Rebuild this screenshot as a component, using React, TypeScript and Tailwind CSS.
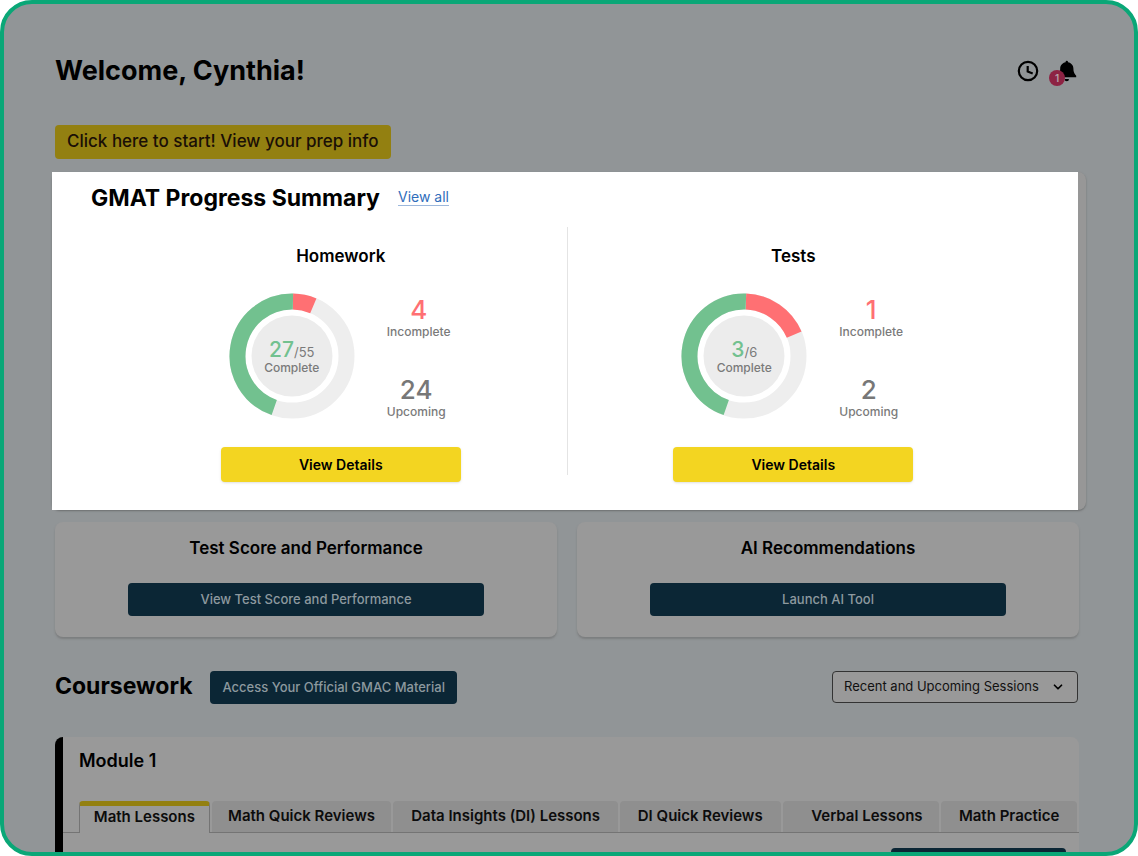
import React, { useState } from 'react';
import { ChevronDown } from 'lucide-react';

interface Progress {
  title: string;
  complete: number;
  total: number;
  incomplete: number;
  upcoming: number;
  // Ring angles in degrees, clockwise from the top
  redFrom: number;
  redTo: number;
  greenFrom: number;
}

const homework: Progress = {
  title: 'Homework', complete: 27, total: 55, incomplete: 4, upcoming: 24, redFrom: 1, redTo: 23, greenFrom: 199,
};
const tests: Progress = {
  title: 'Tests', complete: 3, total: 6, incomplete: 1, upcoming: 2, redFrom: 2, redTo: 67, greenFrom: 199,
};

const tabs = [
  'Math Lessons',
  'Math Quick Reviews',
  'Data Insights (DI) Lessons',
  'DI Quick Reviews',
  'Verbal Lessons',
  'Math Practice',
];

const arc = (from: number, to: number, r: number) => {
  const point = (deg: number) => {
    const rad = ((deg - 90) * Math.PI) / 180;
    return `${63 + r * Math.cos(rad)} ${63 + r * Math.sin(rad)}`;
  };
  return `M ${point(from)} A ${r} ${r} 0 ${to - from > 180 ? 1 : 0} 1 ${point(to)}`;
};

const Donut: React.FC<{ item: Progress }> = ({ item }) => (
  <div className="relative h-[126px] w-[126px]">
    <svg viewBox="0 0 126 126" className="h-full w-full" fill="none" aria-hidden="true">
      <circle cx="63" cy="63" r="54.5" stroke="#eeeeee" strokeWidth="16" />
      <path d={arc(item.redFrom, item.redTo, 54.5)} stroke="#ff7073" strokeWidth="16" />
      <path d={arc(item.greenFrom, 360 + item.redFrom, 54.5)} stroke="#72c18f" strokeWidth="16" />
      <circle cx="63" cy="63" r="40.5" fill="#ececec" />
    </svg>
    <div className="absolute inset-0 flex flex-col items-center justify-center pt-1.5 text-[#7a7a7a]">
      <div className="text-[13px] leading-4">
        <span className="text-[21px] leading-4 font-medium text-[#72c18f]">{item.complete}</span>/{item.total}
      </div>
      <div className="text-xs leading-4 font-medium">Complete</div>
    </div>
  </div>
);

const Stat: React.FC<{ value: number; label: string; red?: boolean }> = ({ value, label, red }) => (
  <div className="flex flex-col items-center">
    <span className={`text-[26px] leading-7 font-medium ${red ? 'text-[#ff7073]' : 'text-[#777777]'}`}>{value}</span>
    <span className="text-xs leading-4 font-medium text-[#7a7a7a]">{label}</span>
  </div>
);

const ProgressColumn: React.FC<{ item: Progress }> = ({ item }) => (
  <div className="flex flex-col items-center">
    <h3 className="mt-[17px] text-[17px] leading-6 font-semibold">{item.title}</h3>
    <div className="mt-6 flex w-60 items-center gap-8 pl-2">
      <Donut item={item} />
      <div className="flex flex-col items-start gap-9 pt-1">
        <Stat value={item.incomplete} label="Incomplete" red />
        <Stat value={item.upcoming} label="Upcoming" />
      </div>
    </div>
    <button className="mt-[27px] h-[35px] w-60 rounded bg-[#f3d521] text-[14px] font-semibold shadow-sm">
      View Details
    </button>
  </div>
);

const ActionCard: React.FC<{ title: string; action: string }> = ({ title, action }) => (
  <div className="flex h-[115px] flex-col items-center rounded-lg bg-[#999999] pt-[14px] shadow-[0_2px_2px_#7c7e7f]">
    <h3 className="text-[17px] leading-6 font-semibold">{title}</h3>
    <button className="mt-[23px] h-[33px] w-[71%] rounded bg-[#0b2635] text-[13px] font-medium text-[#8d999f]">
      {action}
    </button>
  </div>
);

export default function App() {
  const [activeTab, setActiveTab] = useState(tabs[0]);

  return (
    <div className="h-screen overflow-hidden rounded-[32px] border-4 border-[#0aa777] bg-[#919597] pr-[55px] pl-[51px] font-[Inter,sans-serif] text-black">
      {/* Header */}
      <header className="flex items-center justify-between pt-[51px] pr-0.5">
        <h1 className="text-[27px] leading-8 font-bold">Welcome, Cynthia!</h1>
        <div className="flex items-center gap-[10px]">
          <button aria-label="History">
            <svg width="22" height="22" viewBox="0 0 22 22" fill="none" stroke="currentColor" strokeWidth="2.2">
              <circle cx="11" cy="11" r="9.2" />
              <path d="M10.7 6v5.6l5 2" />
            </svg>
          </button>
          <button aria-label="Notifications" className="relative h-7 w-7">
            <svg width="28" height="28" viewBox="0 0 28 28" fill="currentColor">
              <path d="M17.8 3.8a1.2 1.2 0 0 1 1.2 1.2v.3c3.2.6 5.4 3 5.4 6.2 0 3 .5 4.6 2.8 7.2v1.5H8.4v-1.5c2.3-2.6 2.8-4.2 2.8-7.2 0-3.2 2.2-5.6 5.4-6.2V5a1.2 1.2 0 0 1 1.2-1.2zM15.6 22h4.4a2.2 2.2 0 0 1-4.4 0z" />
            </svg>
            <span className="absolute top-[13px] left-0 flex h-4 w-4 items-center justify-center rounded-full bg-[#8d2343] text-[10px] font-semibold text-[#b5a0a8]">
              1
            </span>
          </button>
        </div>
      </header>

      <button className="mt-[38px] block h-[34px] rounded bg-[#938011] px-3 text-[17px] font-medium text-[#1a0f06]">
        Click here to start! View your prep info
      </button>

      {/* Highlighted progress summary */}
      <section className="mt-[13px] -mr-[7px] -ml-[3px] rounded-lg bg-[#979797] pr-2 shadow-[0_1px_2px_#6c6e6f]">
        <div className="h-[338px] bg-white pt-[10px]">
          <div className="flex items-center gap-[18px] pl-[39px]">
            <h2 className="text-[23px] leading-8 font-bold">GMAT Progress Summary</h2>
            <a href="#progress" className="mb-0.5 border-b border-[#9db8dc] text-[14px] leading-4 text-[#2f6dbb]">
              View all
            </a>
          </div>
          <div className="mt-[13px] grid grid-cols-[1fr_1px_1fr] pr-[59px] pl-[63px]">
            <ProgressColumn item={homework} />
            <div className="mb-[7px] bg-[#e4e4e4]" />
            <ProgressColumn item={tests} />
          </div>
        </div>
      </section>

      <div className="mt-3 grid grid-cols-2 gap-5">
        <ActionCard title="Test Score and Performance" action="View Test Score and Performance" />
        <ActionCard title="AI Recommendations" action="Launch AI Tool" />
      </div>

      {/* Coursework */}
      <div className="mt-[34px] flex items-start justify-between pr-px">
        <div className="flex items-start gap-[18px]">
          <h2 className="text-[23px] leading-[30px] font-bold">Coursework</h2>
          <button className="h-[33px] rounded bg-[#0b2635] px-3 text-[13px] font-medium text-[#8d999f]">
            Access Your Official GMAC Material
          </button>
        </div>
        <div className="relative">
          <select
            aria-label="Sessions"
            className="block h-8 w-[246px] appearance-none rounded border border-[#333333] bg-[#999999] pr-8 pl-[11px] text-[13px] text-[#111111]"
          >
            <option>Recent and Upcoming Sessions</option>
          </select>
          <ChevronDown size={14} strokeWidth={3} className="pointer-events-none absolute top-[9px] right-[13px]" />
        </div>
      </div>

      <section className="mt-[33px] rounded-t-lg border-l-8 border-black bg-[#999999]">
        <h3 className="pt-3 pl-4 text-[18px] leading-6 font-semibold">Module 1</h3>
        <div
          role="tablist"
          className="mt-7 grid grid-cols-[131fr_180fr_225fr_161fr_157fr_136fr] gap-x-0.5 border-b border-[#747474] pr-0.5 pl-4"
        >
          {tabs.map(tab => (
            <button
              key={tab}
              role="tab"
              aria-selected={tab === activeTab}
              onClick={() => setActiveTab(tab)}
              className={`text-[15px] font-semibold whitespace-nowrap text-[#0c0c0c] ${
                tab === activeTab
                  ? '-mb-px h-8 rounded-t-sm border-x border-t-[5px] border-x-[#747474] border-t-[#938011] bg-[#999999] pb-1'
                  : 'h-[31px] rounded-t-sm bg-[#8f8f8f]'
              } ${tab === 'Verbal Lessons' ? 'pl-3' : ''}`}
            >
              {tab}
            </button>
          ))}
        </div>
        <div className="flex justify-end pt-[15px] pr-[13px] pb-6">
          <button aria-label="Start lesson" className="h-8 w-[175px] rounded bg-[#0b2635]" />
        </div>
      </section>
    </div>
  );
}
